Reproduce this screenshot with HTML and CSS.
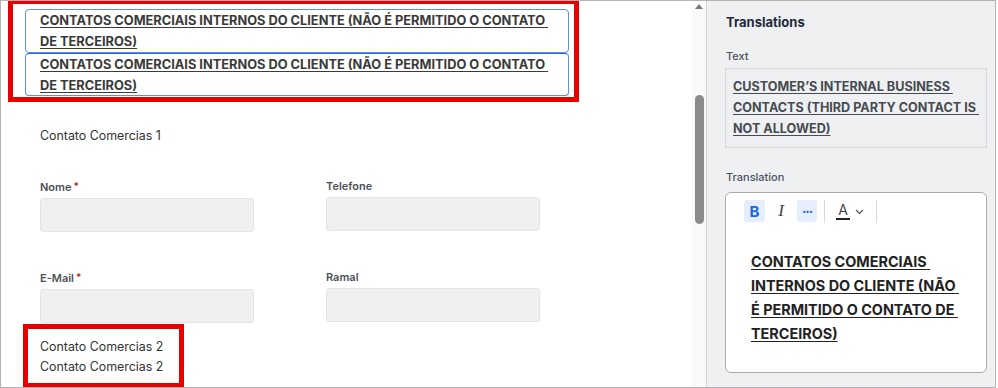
FILE: index.html
```html
<!DOCTYPE html>
<html lang="pt">
<head>
<meta charset="utf-8">
<title>Translations</title>
<link rel="stylesheet" href="styles.css">
</head>
<body>
<div class="frame">
  <div class="main">
    <div class="blue-stack">
      <div class="blue-box"><span class="heading-text">CONTATOS COMERCIAIS INTERNOS DO CLIENTE (NÃO É PERMITIDO O CONTATO DE TERCEIROS)</span></div>
      <div class="blue-box"><span class="heading-text">CONTATOS COMERCIAIS INTERNOS DO CLIENTE (NÃO É PERMITIDO O CONTATO DE TERCEIROS)</span></div>
    </div>
    <div class="section-title">Contato Comercias 1</div>
    <div class="form-grid">
      <div class="field">
        <div class="label">Nome<span class="req">*</span></div>
        <div class="input"></div>
      </div>
      <div class="field">
        <div class="label">Telefone</div>
        <div class="input"></div>
      </div>
      <div class="field">
        <div class="label">E-Mail<span class="req">*</span></div>
        <div class="input"></div>
      </div>
      <div class="field">
        <div class="label">Ramal</div>
        <div class="input"></div>
      </div>
    </div>
    <div class="section-list">
      <div class="section-line">Contato Comercias 2</div>
      <div class="section-line">Contato Comercias 2</div>
    </div>
    <div class="mark mark-top"></div>
    <div class="mark mark-bottom"></div>
  </div>
  <div class="scrollbar">
    <div class="scroll-arrow"></div>
    <div class="scroll-thumb"></div>
  </div>
  <aside class="side">
    <div class="side-title">Translations</div>
    <div class="side-label label-text">Text</div>
    <div class="source-box"><span class="src-text">CUSTOMER’S INTERNAL BUSINESS CONTACTS (THIRD PARTY CONTACT IS NOT ALLOWED)</span></div>
    <div class="side-label label-translation">Translation</div>
    <div class="editor">
      <div class="toolbar">
        <div class="tb-btn active bold-btn">B</div>
        <div class="tb-btn italic-btn">I</div>
        <div class="tb-btn active more-btn">···</div>
        <div class="tb-sep"></div>
        <div class="tb-color">
          <span class="color-a">A</span>
          <svg class="chev" width="9" height="6" viewBox="0 0 9 6"><path d="M1 1l3.5 3.5L8 1" fill="none" stroke="#555" stroke-width="1.2"/></svg>
        </div>
        <div class="tb-sep"></div>
      </div>
      <div class="editor-text"><span class="tr-text">CONTATOS COMERCIAIS INTERNOS DO CLIENTE (NÃO É PERMITIDO O CONTATO DE TERCEIROS)</span></div>
    </div>
  </aside>
</div>
</body>
</html>
```

FILE: styles.css
```css
* { box-sizing: border-box; }
html, body { margin: 0; padding: 0; background: #ffffff; }
body { font-family: Inter, "Noto Sans", "Liberation Sans", sans-serif; color: #333; }

.frame {
  width: 996px;
  height: 388px;
  border: 1px solid #b3b3b3;
  display: flex;
  overflow: hidden;
}

.main {
  position: relative;
  width: 691px;
  flex: none;
  padding: 8px 0 0 24px;
  background: #fff;
}

.blue-stack { width: 544px; }
.blue-box {
  border: 1px solid #5a8fe3;
  border-radius: 4px;
  padding: 0 10px 0 14px;
  font-size: 12.8px;
  line-height: 21px;
  font-weight: 700;
  color: #3a3a3a;
  height: 44px;
  white-space: pre-wrap;
}
.blue-box + .blue-box { height: 43px; border-top-color: #2466d6; }
.heading-text {
  text-decoration: underline;
  text-decoration-thickness: 1px;
  text-underline-offset: 2px;
}

.section-title {
  margin: 30px 0 0 15px;
  font-size: 12.4px;
  line-height: 20px;
  color: #333;
}

.form-grid {
  margin: 33px 0 0 15px;
  display: grid;
  grid-template-columns: 214px 214px;
  column-gap: 72px;
  row-gap: 38px;
}
.label {
  font-size: 11px;
  line-height: 14px;
  font-weight: 600;
  color: #4d5157;
  margin-bottom: 4px;
}
.req { color: #b3261e; margin-left: 2px; font-size: 10px; vertical-align: 1px; }
.input {
  height: 34px;
  background: #eff0f2;
  border: 1px solid #e3e4e6;
  border-radius: 3px;
}

.section-list { margin: 14px 0 0 15px; }
.section-line { font-size: 12.4px; line-height: 20px; color: #333; }

.mark { position: absolute; border: 5px solid #e60000; }
.mark-top { left: 7px; top: -2px; width: 571px; height: 103px; }
.mark-bottom { left: 22px; top: 323px; width: 161px; height: 64px; }

.scrollbar {
  width: 14px;
  flex: none;
  background: #fafafa;
  position: relative;
}
.scroll-arrow {
  position: absolute;
  left: 3px;
  top: 3px;
  width: 0; height: 0;
  border-left: 4px solid transparent;
  border-right: 4px solid transparent;
  border-bottom: 5px solid #7a7a7a;
}
.scroll-thumb {
  position: absolute;
  left: 3px;
  top: 94px;
  width: 9px;
  height: 129px;
  border-radius: 5px;
  background: #8b8b8b;
}

.side {
  flex: 1;
  border-left: 1px solid #d2d3d5;
  background: #eff0f2;
  padding: 12px 8px 0 18px;
}
.side-title {
  font-size: 13px;
  line-height: 18px;
  font-weight: 700;
  color: #1f2a37;
  padding-left: 1px;
}
.side-label {
  font-size: 11px;
  line-height: 14px;
  font-weight: 500;
  color: #4a5360;
  padding-left: 1px;
}
.label-text { margin-top: 18px; }
.source-box {
  margin-top: 5px;
  border: 1px solid #d5d7da;
  padding: 7px 4px 8px 7px;
  font-size: 12.6px;
  line-height: 21px;
  font-weight: 700;
  color: #474b51;
  white-space: pre-wrap;
}
.src-text, .tr-text {
  text-decoration: underline;
  text-decoration-thickness: 1px;
  text-underline-offset: 2px;
}
.label-translation { margin-top: 22px; }
.editor {
  margin-top: 8px;
  height: 181px;
  background: #fff;
  border: 1px solid #a9abae;
  border-radius: 6px;
  padding: 7px 22px 0 18px;
}
.toolbar {
  display: flex;
  align-items: center;
  height: 22px;
}
.tb-btn {
  width: 21px;
  height: 22px;
  border-radius: 3px;
  display: flex;
  align-items: center;
  justify-content: center;
  color: #444;
  margin-right: 8px;
}
.tb-btn.active { background: #e6eefc; color: #1a66e0; }
.bold-btn { font-weight: 700; font-size: 15px; }
.italic-btn { font-family: "Liberation Serif", serif; font-style: italic; font-size: 17px; color: #444; width: 14px; margin-right: 9px; margin-left: 1px; }
.more-btn { font-size: 13px; font-weight: 700; letter-spacing: -1px; width: 20px; margin-right: 7px; }
.tb-sep { width: 1px; height: 23px; background: #d8d9db; }
.tb-color {
  display: flex;
  align-items: center;
  margin: 0 12px 0 11px;
}
.color-a {
  font-size: 14px;
  line-height: 16px;
  color: #444;
  border-bottom: 2px solid #222;
  width: 14px;
  text-align: center;
  margin-right: 5px;
}
.chev { margin-top: 2px; }
.editor-text {
  margin-top: 28px;
  padding-left: 7px;
  font-size: 14.4px;
  line-height: 24px;
  font-weight: 700;
  color: #222;
  white-space: pre-wrap;
}
```
